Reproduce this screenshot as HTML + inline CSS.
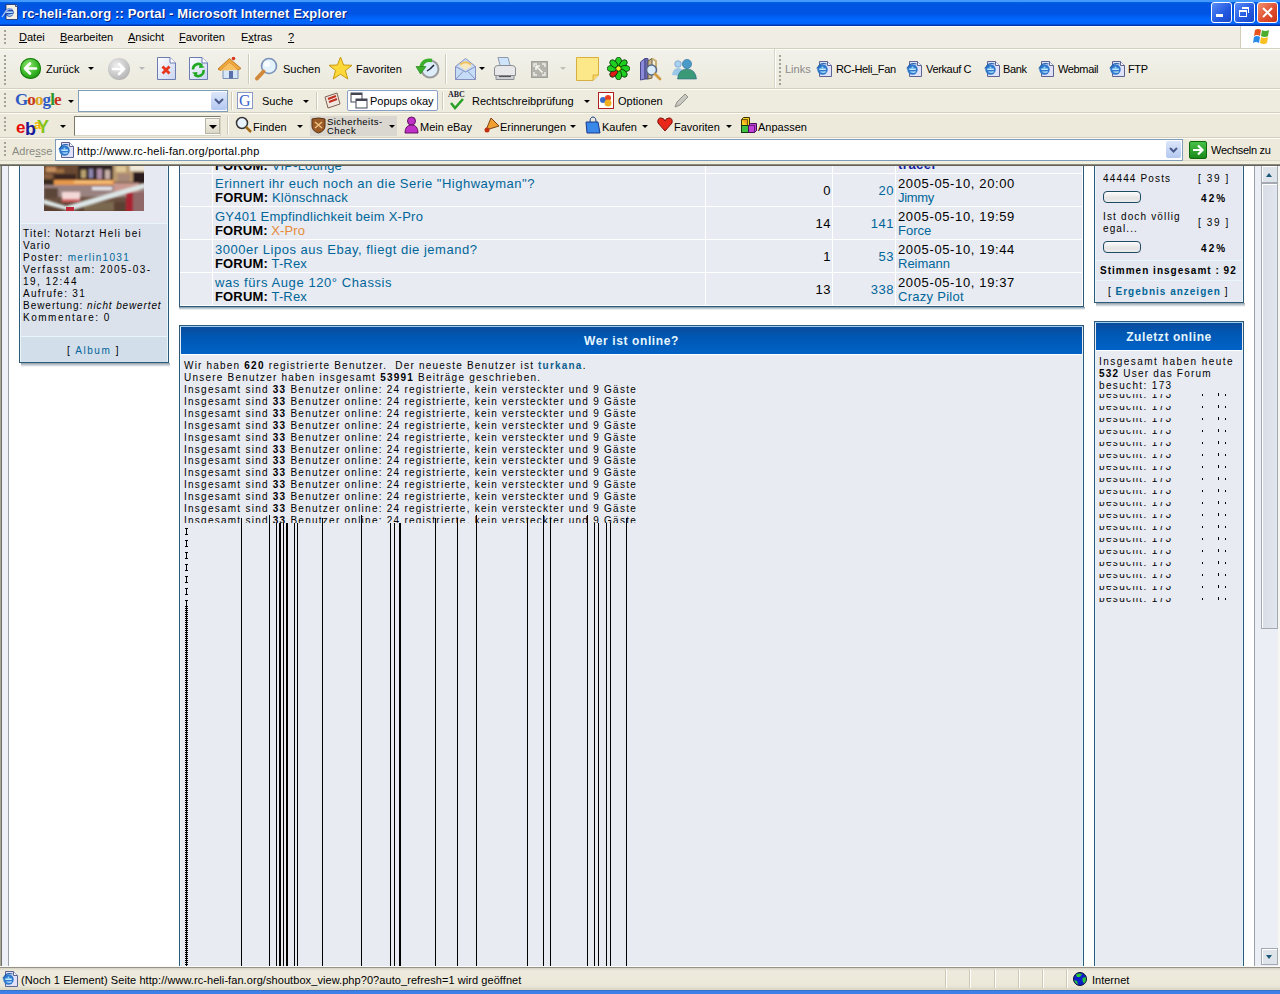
<!DOCTYPE html>
<html><head><meta charset="utf-8">
<style>
*{margin:0;padding:0;box-sizing:border-box}
html,body{width:1280px;height:994px;overflow:hidden;background:#fff;font-family:"Liberation Sans",sans-serif}
.a{position:absolute}
.t{position:absolute;white-space:nowrap;font-size:11px;line-height:13px;color:#000}
#title{left:0;top:0;width:1280px;height:26px;background:linear-gradient(#4499ff 0,#4499ff 2px,#0066ee 2px,#0058e0 3px,#0054e3 8px,#0054e3 14px,#005cf0 16px,#0066ff 19px,#0064fc 24px,#0033aa 25px,#0033aa 26px)}
.bar{position:absolute;left:0;width:1280px;background:#eeede5}
.grip{position:absolute;width:2px;background:repeating-linear-gradient(#a5a398 0 2px,transparent 2px 4px)}
.sepv{position:absolute;width:1px;background:#c5c2b2;box-shadow:1px 0 0 #fff}
.ch{font-size:11px;line-height:13px}
.blink{color:#006699}
.pg{font-size:10px;line-height:12px;color:#000}
.tp{font-size:13px;line-height:14px;letter-spacing:.5px}
.ol{letter-spacing:1.25px}
.ie{position:absolute;font-size:15px;line-height:14px;font-weight:bold;color:#2a78d8;font-family:"Liberation Sans",sans-serif}
.vl{position:absolute;top:523px;height:443px;width:1px;background:#000}
</style></head><body>

<!-- TITLE BAR -->
<div id="title" class="a"></div>
<div class="t" style="left:22px;top:6px;color:#fff;font-weight:bold;font-size:13px;line-height:16px;letter-spacing:.13px;text-shadow:1px 1px 0 #0a1e78">rc-heli-fan.org :: Portal - Microsoft Internet Explorer</div>

<!-- MENU BAR -->
<div class="bar" style="top:26px;height:1px;background:#f8fafc"></div>
<div class="bar" style="top:27px;height:21px;background:#efede4"></div>
<div class="bar" style="top:48px;height:1px;background:#d3d0c2"></div>
<div class="bar" style="top:49px;height:1px;background:#fdfdf4"></div>
<div class="bar" style="top:50px;height:38px;background:linear-gradient(#f2f1ea,#eceadd)"></div>
<div class="bar" style="top:88px;height:1px;background:#d3d0c2"></div>
<div class="bar" style="top:89px;height:1px;background:#fdfdf4"></div>
<div class="bar" style="top:90px;height:22px;background:#eeecdf"></div>
<div class="bar" style="top:112px;height:1px;background:#d3d0c2"></div>
<div class="bar" style="top:113px;height:1px;background:#fdfdf4"></div>
<div class="bar" style="top:114px;height:23px;background:#edeadc"></div>
<div class="bar" style="top:137px;height:1px;background:#d3d0c2"></div>
<div class="bar" style="top:138px;height:1px;background:#fdfdf4"></div>
<div class="bar" style="top:139px;height:21px;background:#edeadc"></div>
<div class="a" style="left:0;top:160px;width:1280px;height:1px;background:#dcd9c8"></div>
<div class="a" style="left:0;top:161px;width:1280px;height:3px;background:#f0eedf"></div>
<div class="a" style="left:0;top:164px;width:1280px;height:1px;background:#8a887c"></div>
<div class="a" style="left:0;top:165px;width:1280px;height:1px;background:#65645a"></div>

<!-- CONTENT FRAME -->
<div class="a" style="left:0;top:166px;width:1px;height:800px;background:#a8a898"></div>
<div class="a" style="left:1px;top:166px;width:1px;height:800px;background:#707068"></div>
<div class="a" style="left:2px;top:166px;width:6px;height:800px;background:#eef0f8"></div>
<div class="a" style="left:8px;top:166px;width:1px;height:800px;background:#9aa0a8"></div>



<!-- title icon -->
<svg class="a" style="left:1px;top:3px" width="18" height="18" viewBox="0 0 18 18"><path d="M5 1.5H14.5L16.5 3.5V16.5H5Z" fill="#f4f0e4" stroke="#1a2a6a" stroke-width=".8"/><path d="M14.5 1.5V3.5H16.5" fill="#fff" stroke="#1a2a6a" stroke-width=".8"/><circle cx="8.5" cy="9.5" r="4.2" fill="#1e4ab8"/><path d="M5.2 9.2H11.8" stroke="#c8f0ff" stroke-width="1.4"/><path d="M11.6 11.3Q9 12.6 6.5 11.8" stroke="#c8f0ff" stroke-width="1.1" fill="none"/><path d="M1 14L5.5 7.5Q8 5.5 11.5 6" stroke="#b8c8f0" stroke-width="1.3" fill="none"/></svg>
<!-- caption buttons -->
<div class="a" style="left:1211px;top:2px;width:21px;height:21px;border:1px solid #fff;border-radius:3px;background:linear-gradient(135deg,#5a8cf8,#2258e0 60%,#1a48c8)"></div>
<div class="a" style="left:1216px;top:14px;width:7px;height:3px;background:#fff"></div>
<div class="a" style="left:1234px;top:2px;width:21px;height:21px;border:1px solid #fff;border-radius:3px;background:linear-gradient(135deg,#5a8cf8,#2258e0 60%,#1a48c8)"></div>
<div class="a" style="left:1239px;top:10px;width:8px;height:7px;border:1px solid #fff;border-top-width:2px"></div>
<div class="a" style="left:1242px;top:7px;width:7px;height:6px;border:1px solid #fff;border-top-width:2px;border-left:none;border-bottom:none"></div>
<div class="a" style="left:1257px;top:2px;width:21px;height:21px;border:1px solid #fff;border-radius:3px;background:linear-gradient(135deg,#f09070,#e05030 55%,#c83818)"></div>
<svg class="a" style="left:1257px;top:2px" width="21" height="21"><path d="M6 6 L15 15 M15 6 L6 15" stroke="#fff" stroke-width="2"/></svg>

<!-- MENU -->
<div class="grip" style="left:4px;top:30px;height:16px"></div>
<div class="t ch" style="left:19px;top:31px"><u>D</u>atei</div>
<div class="t ch" style="left:60px;top:31px"><u>B</u>earbeiten</div>
<div class="t ch" style="left:128px;top:31px"><u>A</u>nsicht</div>
<div class="t ch" style="left:179px;top:31px"><u>F</u>avoriten</div>
<div class="t ch" style="left:241px;top:31px">E<u>x</u>tras</div>
<div class="t ch" style="left:288px;top:31px"><u>?</u></div>
<div class="a" style="left:1240px;top:26px;width:1px;height:22px;background:#d0cdb8"></div>
<div class="a" style="left:1241px;top:26px;width:39px;height:22px;background:#fff"></div>
<svg class="a" style="left:1251px;top:27px" width="22" height="20" viewBox="0 0 22 20"><path d="M4 3 Q7 1 10 3 L9 9 Q6 7 3 9Z" fill="#e8541c"/><path d="M11 3 Q14 5 18 3 L17 9 Q14 11 10 9Z" fill="#4cae2c"/><path d="M3 10 Q6 8 9 10 L8 16 Q5 14 2 16Z" fill="#2a8ae8"/><path d="M10 10 Q13 12 17 10 L16 16 Q13 18 9 16Z" fill="#f8c020"/></svg>

<!-- STANDARD TOOLBAR -->
<div class="grip" style="left:4px;top:55px;height:30px"></div>
<div class="a" style="left:20px;top:58px;width:21px;height:21px;border-radius:50%;background:radial-gradient(circle at 40% 35%,#8ee870,#32b020 55%,#1a8010);box-shadow:0 0 0 1px #1a7a10 inset"></div>
<svg class="a" style="left:20px;top:58px" width="21" height="21"><path d="M5 10.5 L10 5.5 M5 10.5 L10 15.5 M5 10.5 H16" stroke="#fff" stroke-width="2.6" stroke-linecap="round" fill="none"/></svg>
<div class="t ch" style="left:46px;top:63px">Zurück</div>
<div class="a" style="left:88px;top:67px;border-left:3px solid transparent;border-right:3px solid transparent;border-top:3px solid #000"></div>
<div class="a" style="left:108px;top:58px;width:22px;height:22px;border-radius:50%;background:radial-gradient(circle at 40% 35%,#f0f0f0,#c0c0c0 60%,#a0a0a0)"></div>
<svg class="a" style="left:108px;top:58px" width="22" height="22"><path d="M16 11 L11 6 M16 11 L11 16 M16 11 H5" stroke="#fff" stroke-width="2.6" stroke-linecap="round" fill="none"/></svg>
<div class="a" style="left:139px;top:67px;border-left:3px solid transparent;border-right:3px solid transparent;border-top:3px solid #b8b8b8"></div>
<!-- stop -->
<svg class="a" style="left:156px;top:56px" width="21" height="25" viewBox="0 0 21 25"><path d="M1.5 1.5H14L19.5 7V23.5H1.5Z" fill="url(#docg)" stroke="#6c7cb0"/><path d="M14 1.5V7H19.5" fill="#fff" stroke="#6c7cb0"/><path d="M6.5 10.5L13.5 17.5M13.5 10.5L6.5 17.5" stroke="#e8361c" stroke-width="2.8"/></svg>
<!-- refresh -->
<svg class="a" style="left:188px;top:56px" width="21" height="25" viewBox="0 0 21 25"><defs><linearGradient id="docg" x1="0" y1="0" x2="1" y2="1"><stop offset="0" stop-color="#ffffff"/><stop offset="1" stop-color="#c8d4f0"/></linearGradient></defs><path d="M1.5 1.5H14L19.5 7V23.5H1.5Z" fill="url(#docg)" stroke="#6c7cb0"/><path d="M14 1.5V7H19.5" fill="#fff" stroke="#6c7cb0"/><path d="M5 13.5A5.3 5.3 0 0 1 14 9.5" stroke="#22a822" stroke-width="2.6" fill="none"/><path d="M15.5 14A5.3 5.3 0 0 1 6.5 18.5" stroke="#22a822" stroke-width="2.6" fill="none"/><path d="M12 7L16.5 11.5L11 12Z" fill="#22a822"/><path d="M8.5 20.5L4 16.5L9.5 16Z" fill="#22a822"/></svg>
<!-- home -->
<svg class="a" style="left:217px;top:55px" width="26" height="26" viewBox="0 0 26 26"><path d="M6 13V23.5H21V13" fill="#d4e6f8" stroke="#7890b0"/><path d="M12 16H16V23.5H12Z" fill="#5a70a8"/><path d="M1 14L12.5 3.5L24 13.5L21 15L12.5 7.5L3.5 15.5Z" fill="#f0a838" stroke="#c07a28" stroke-width="1"/><path d="M3.5 15.5L12.5 7.5L21 15" fill="#f8c060"/><circle cx="16.5" cy="3.5" r="1.8" fill="#d83820"/></svg>
<div class="a" style="left:248px;top:54px;width:1px;height:30px;background:#cfcbb8;box-shadow:1px 0 0 #fff"></div>
<!-- search -->
<svg class="a" style="left:254px;top:56px" width="26" height="26" viewBox="0 0 26 26"><circle cx="15" cy="10" r="7.5" fill="#e4f2fc" stroke="#7890b8" stroke-width="1.6"/><circle cx="13" cy="8" r="3" fill="#fff" opacity=".8"/><path d="M9.5 15.5L3 22.5" stroke="#d0883a" stroke-width="4" stroke-linecap="round"/></svg>
<div class="t ch" style="left:283px;top:63px">Suchen</div>
<!-- star -->
<svg class="a" style="left:328px;top:56px" width="25" height="25" viewBox="0 0 25 25"><path d="M12.5 1 L15.6 9 L24 9.3 L17.4 14.6 L19.8 23 L12.5 18.2 L5.2 23 L7.6 14.6 L1 9.3 L9.4 9Z" fill="#fcd838" stroke="#c89a10" stroke-width="1"/></svg>
<div class="t ch" style="left:356px;top:63px">Favoriten</div>
<!-- history -->
<svg class="a" style="left:414px;top:56px" width="26" height="26" viewBox="0 0 26 26"><circle cx="16" cy="13" r="8.5" fill="#dcecf8" stroke="#9a9a9a" stroke-width="2"/><path d="M16 13L20 9" stroke="#223" stroke-width="1.6"/><path d="M16 13L13 15" stroke="#223" stroke-width="1.3"/><path d="M18 4.5Q9 3 7 11" stroke="#3ab02a" stroke-width="3.6" fill="none"/><path d="M2 10.5L12 10.5L6.5 18Z" fill="#3ab02a" stroke="#1a7a10" stroke-width=".6"/></svg>
<div class="a" style="left:445px;top:54px;width:1px;height:30px;background:#cfcbb8;box-shadow:1px 0 0 #fff"></div>
<!-- mail -->
<svg class="a" style="left:454px;top:57px" width="23" height="24" viewBox="0 0 23 24"><path d="M1.5 9.5L11.5 1.5L21.5 9.5V22.5H1.5Z" fill="#c4dcf6" stroke="#8890c0"/><path d="M5 9L11.5 4L18 9L11.5 13Z" fill="#f8e8c0"/><path d="M6 7.5Q11.5 3 17 7.5" stroke="#f0c060" stroke-width="2" fill="none"/><path d="M1.5 9.5L11.5 15L21.5 9.5M1.5 22.5L9 14.5M21.5 22.5L14 14.5" stroke="#8890c0" fill="none"/></svg>
<div class="a" style="left:479px;top:67px;border-left:3px solid transparent;border-right:3px solid transparent;border-top:3px solid #000"></div>
<!-- printer -->
<svg class="a" style="left:493px;top:56px" width="24" height="25" viewBox="0 0 24 25"><path d="M5 1.5H15L17.5 11H7.5Z" fill="#cfe4fa" stroke="#8a9ab0"/><path d="M1.5 12Q2 9.5 5 9.5H19Q22 9.5 22.5 12V19.5H1.5Z" fill="#e8e8ea" stroke="#8a8e94"/><path d="M3 19.5H21V23.5H3Z" fill="#d0d2d6" stroke="#8a8e94"/><path d="M6 20.5H18" stroke="#555" stroke-width="1.2"/></svg>
<!-- edit (disabled) -->
<svg class="a" style="left:531px;top:61px" width="17" height="17" viewBox="0 0 17 17"><rect x=".5" y=".5" width="16" height="16" fill="#b4b4ac" stroke="#a0a098"/><path d="M3 6V3H6M11 3H14V6M14 11V14H11M6 14H3V11" stroke="#f0f0ec" stroke-width="1.4" fill="none"/><path d="M11.5 11.5L5 5M5 5H9M5 5V9" stroke="#f4f4f0" stroke-width="1.6" fill="none"/></svg>
<div class="a" style="left:560px;top:67px;border-left:3px solid transparent;border-right:3px solid transparent;border-top:3px solid #c0c0b8"></div>
<!-- note -->
<svg class="a" style="left:576px;top:57px" width="23" height="24" viewBox="0 0 23 24"><path d="M.5 .5H22.5V18L17 23.5H.5Z" fill="#fce888" stroke="#d8b040"/><path d="M22.5 18H17V23.5" fill="#f8d868" stroke="#d8b040"/></svg>
<!-- icq -->
<svg class="a" style="left:607px;top:57px" width="23" height="23" viewBox="0 0 23 23"><ellipse cx="11.5" cy="4.8" rx="3" ry="4.6" fill="#20d020" stroke="#0a3a0a" stroke-width=".9" transform="rotate(0 11.5 11.5)"/><ellipse cx="11.5" cy="4.8" rx="3" ry="4.6" fill="#20d020" stroke="#0a3a0a" stroke-width=".9" transform="rotate(45 11.5 11.5)"/><ellipse cx="11.5" cy="4.8" rx="3" ry="4.6" fill="#20d020" stroke="#0a3a0a" stroke-width=".9" transform="rotate(90 11.5 11.5)"/><ellipse cx="11.5" cy="4.8" rx="3" ry="4.6" fill="#20d020" stroke="#0a3a0a" stroke-width=".9" transform="rotate(135 11.5 11.5)"/><ellipse cx="11.5" cy="4.8" rx="3" ry="4.6" fill="#20d020" stroke="#0a3a0a" stroke-width=".9" transform="rotate(180 11.5 11.5)"/><ellipse cx="11.5" cy="4.8" rx="3" ry="4.6" fill="#e01818" stroke="#0a3a0a" stroke-width=".9" transform="rotate(225 11.5 11.5)"/><ellipse cx="11.5" cy="4.8" rx="3" ry="4.6" fill="#20d020" stroke="#0a3a0a" stroke-width=".9" transform="rotate(270 11.5 11.5)"/><ellipse cx="11.5" cy="4.8" rx="3" ry="4.6" fill="#20d020" stroke="#0a3a0a" stroke-width=".9" transform="rotate(315 11.5 11.5)"/><circle cx="11.5" cy="11.5" r="2.6" fill="#f8f020" stroke="#0a3a0a" stroke-width=".8"/></svg>
<!-- research -->
<svg class="a" style="left:639px;top:57px" width="24" height="24" viewBox="0 0 24 24"><path d="M1.5 5L6 1.5V22L1.5 23Z" fill="#8a8ad8" stroke="#4a4a8a"/><path d="M6 1.5H9V22H6Z" fill="#6a6ab8" stroke="#4a4a8a"/><path d="M9 4L13 1.5V21L9 22Z" fill="#c8b890" stroke="#6a5a3a"/><path d="M13 1.5L17 4V14" fill="none" stroke="#c8b070" stroke-width="2"/><circle cx="12.5" cy="13" r="5" fill="#d8ecfc" stroke="#5a6a88" stroke-width="1.6"/><path d="M16 17L21 22" stroke="#d09a40" stroke-width="2.8" stroke-linecap="round"/></svg>
<!-- messenger -->
<svg class="a" style="left:671px;top:58px" width="26" height="22" viewBox="0 0 26 22"><circle cx="7" cy="6" r="3.3" fill="#a8d0f0" stroke="#6890c0" stroke-width=".6"/><path d="M1 17Q2 10 7 10Q11 10 12 14L10 18Z" fill="#9cc8e8"/><circle cx="16" cy="6" r="4.6" fill="#4a9ac8" stroke="#2a6a98" stroke-width=".6"/><path d="M6.5 21Q7.5 11 16 11Q24.5 11 25.5 21Z" fill="#3a9a78" stroke="#2a6a88" stroke-width=".6"/></svg>
<div class="a" style="left:774px;top:49px;width:1px;height:39px;background:#d8d5c4;box-shadow:1px 0 0 #fff"></div>
<div class="grip" style="left:779px;top:55px;height:30px"></div>
<div class="t ch" style="left:785px;top:63px;color:#8a8a8a">Links</div>
<svg class="a" style="left:816px;top:61px" width="16" height="16" viewBox="0 0 16 16"><path d="M3.5 0.5H11.5L15.5 4.5V15.5H3.5Z" fill="#dfe2fa" stroke="#5c6390"/><path d="M11.5 0.5V4.5H15.5" fill="#f4f4ff" stroke="#5c6390"/><circle cx="6.5" cy="8.5" r="5.2" fill="#2f78cc"/><path d="M3.3 8.2H9.8" stroke="#bfeaff" stroke-width="1.6"/><path d="M9.6 10.6Q7 11.6 4.5 10.8" stroke="#bfeaff" stroke-width="1.2" fill="none"/><circle cx="6.5" cy="6.6" r="1" fill="#9adcff"/><path d="M0.8 7.5L4 3.5Q7 1.8 10.5 3" stroke="#1f5ea8" stroke-width="1.2" fill="none"/></svg>
<div class="t ch" style="left:836px;top:63px;letter-spacing:-.35px">RC-Heli_Fan</div>
<svg class="a" style="left:906px;top:61px" width="16" height="16" viewBox="0 0 16 16"><path d="M3.5 0.5H11.5L15.5 4.5V15.5H3.5Z" fill="#dfe2fa" stroke="#5c6390"/><path d="M11.5 0.5V4.5H15.5" fill="#f4f4ff" stroke="#5c6390"/><circle cx="6.5" cy="8.5" r="5.2" fill="#2f78cc"/><path d="M3.3 8.2H9.8" stroke="#bfeaff" stroke-width="1.6"/><path d="M9.6 10.6Q7 11.6 4.5 10.8" stroke="#bfeaff" stroke-width="1.2" fill="none"/><circle cx="6.5" cy="6.6" r="1" fill="#9adcff"/><path d="M0.8 7.5L4 3.5Q7 1.8 10.5 3" stroke="#1f5ea8" stroke-width="1.2" fill="none"/></svg>
<div class="t ch" style="left:926px;top:63px;letter-spacing:-.35px">Verkauf C</div>
<svg class="a" style="left:984px;top:61px" width="16" height="16" viewBox="0 0 16 16"><path d="M3.5 0.5H11.5L15.5 4.5V15.5H3.5Z" fill="#dfe2fa" stroke="#5c6390"/><path d="M11.5 0.5V4.5H15.5" fill="#f4f4ff" stroke="#5c6390"/><circle cx="6.5" cy="8.5" r="5.2" fill="#2f78cc"/><path d="M3.3 8.2H9.8" stroke="#bfeaff" stroke-width="1.6"/><path d="M9.6 10.6Q7 11.6 4.5 10.8" stroke="#bfeaff" stroke-width="1.2" fill="none"/><circle cx="6.5" cy="6.6" r="1" fill="#9adcff"/><path d="M0.8 7.5L4 3.5Q7 1.8 10.5 3" stroke="#1f5ea8" stroke-width="1.2" fill="none"/></svg>
<div class="t ch" style="left:1003px;top:63px;letter-spacing:-.35px">Bank</div>
<svg class="a" style="left:1038px;top:61px" width="16" height="16" viewBox="0 0 16 16"><path d="M3.5 0.5H11.5L15.5 4.5V15.5H3.5Z" fill="#dfe2fa" stroke="#5c6390"/><path d="M11.5 0.5V4.5H15.5" fill="#f4f4ff" stroke="#5c6390"/><circle cx="6.5" cy="8.5" r="5.2" fill="#2f78cc"/><path d="M3.3 8.2H9.8" stroke="#bfeaff" stroke-width="1.6"/><path d="M9.6 10.6Q7 11.6 4.5 10.8" stroke="#bfeaff" stroke-width="1.2" fill="none"/><circle cx="6.5" cy="6.6" r="1" fill="#9adcff"/><path d="M0.8 7.5L4 3.5Q7 1.8 10.5 3" stroke="#1f5ea8" stroke-width="1.2" fill="none"/></svg>
<div class="t ch" style="left:1058px;top:63px;letter-spacing:-.35px">Webmail</div>
<svg class="a" style="left:1109px;top:61px" width="16" height="16" viewBox="0 0 16 16"><path d="M3.5 0.5H11.5L15.5 4.5V15.5H3.5Z" fill="#dfe2fa" stroke="#5c6390"/><path d="M11.5 0.5V4.5H15.5" fill="#f4f4ff" stroke="#5c6390"/><circle cx="6.5" cy="8.5" r="5.2" fill="#2f78cc"/><path d="M3.3 8.2H9.8" stroke="#bfeaff" stroke-width="1.6"/><path d="M9.6 10.6Q7 11.6 4.5 10.8" stroke="#bfeaff" stroke-width="1.2" fill="none"/><circle cx="6.5" cy="6.6" r="1" fill="#9adcff"/><path d="M0.8 7.5L4 3.5Q7 1.8 10.5 3" stroke="#1f5ea8" stroke-width="1.2" fill="none"/></svg>
<div class="t ch" style="left:1128px;top:63px;letter-spacing:-.35px">FTP</div>

<!-- GOOGLE BAR -->
<div class="grip" style="left:4px;top:93px;height:16px"></div>
<div class="t" style="left:15px;top:90px;font-family:'Liberation Serif',serif;font-size:17px;line-height:19px;font-weight:bold;letter-spacing:-.9px"><span style="color:#2f5bc4">G</span><span style="color:#c8361a">o</span><span style="color:#dca418">o</span><span style="color:#2f5bc4">g</span><span style="color:#2a962a">l</span><span style="color:#c8361a">e</span></div>
<div class="a" style="left:68px;top:100px;border-left:3px solid transparent;border-right:3px solid transparent;border-top:3px solid #000"></div>
<div class="a" style="left:78px;top:90px;width:150px;height:22px;background:#fff;border:1px solid #7f9db9"></div>
<div class="a" style="left:211px;top:92px;width:16px;height:18px;background:linear-gradient(#dce6fa,#b4c8f0);border-radius:2px"></div>
<svg class="a" style="left:211px;top:92px" width="16" height="18"><path d="M4 7 L8 11 L12 7" stroke="#4a5a8a" stroke-width="2" fill="none"/></svg>
<div class="a" style="left:231px;top:92px;width:1px;height:18px;background:#cfcbb8;box-shadow:1px 0 0 #fff"></div>
<div class="a" style="left:237px;top:92px;width:16px;height:17px;background:#fff;border:1px solid #8a9ac8"></div>
<div class="t" style="left:239px;top:92px;font-family:'Liberation Serif',serif;font-size:16px;line-height:17px;color:#3a64c8">G</div>
<div class="t ch" style="left:262px;top:95px">Suche</div>
<div class="a" style="left:303px;top:100px;border-left:3px solid transparent;border-right:3px solid transparent;border-top:3px solid #000"></div>
<div class="a" style="left:316px;top:92px;width:1px;height:18px;background:#cfcbb8;box-shadow:1px 0 0 #fff"></div>
<svg class="a" style="left:323px;top:92px" width="18" height="17"><path d="M2 5 L14 1 L17 12 L5 16Z" fill="#f0e8e0" stroke="#806050"/><path d="M5 7 L13 4 M6 10 L14 7" stroke="#c03020" stroke-width="2"/></svg>
<div class="a" style="left:347px;top:90px;width:91px;height:21px;background:#fff;border:1px solid #8aa0c8;border-radius:2px"></div>
<svg class="a" style="left:350px;top:92px" width="18" height="17"><rect x="1" y="1" width="11" height="9" fill="#fff" stroke="#445"/><rect x="1" y="1" width="11" height="2" fill="#445"/><rect x="6" y="7" width="11" height="9" fill="#fff" stroke="#445"/><rect x="6" y="7" width="11" height="2" fill="#445"/></svg>
<div class="t ch" style="left:370px;top:95px">Popups okay</div>
<div class="a" style="left:442px;top:92px;width:1px;height:18px;background:#cfcbb8;box-shadow:1px 0 0 #fff"></div>
<div class="t" style="left:448px;top:91px;font-family:'Liberation Serif',serif;font-size:8px;line-height:8px;font-weight:bold;color:#223">ABC</div>
<svg class="a" style="left:449px;top:98px" width="16" height="12"><path d="M2 5 L6 10 L14 1" stroke="#28a028" stroke-width="2.5" fill="none"/></svg>
<div class="t ch" style="left:472px;top:95px">Rechtschreibprüfung</div>
<div class="a" style="left:584px;top:100px;border-left:3px solid transparent;border-right:3px solid transparent;border-top:3px solid #000"></div>
<div class="a" style="left:598px;top:92px;width:16px;height:17px;background:#fff;border:1px solid #b02020"></div>
<svg class="a" style="left:598px;top:92px" width="16" height="17"><circle cx="5" cy="8" r="3" fill="#3a6ac8"/><circle cx="10" cy="6" r="3" fill="#e84020"/><circle cx="10" cy="11" r="3.5" fill="#f0b020"/></svg>
<div class="t ch" style="left:618px;top:95px">Optionen</div>
<svg class="a" style="left:672px;top:92px" width="17" height="17"><path d="M3 15 L5 10 L13 2 L16 5 L8 13Z" fill="#c8c8c0" stroke="#909088"/></svg>

<!-- EBAY BAR -->
<div class="grip" style="left:4px;top:117px;height:16px"></div>
<svg class="a" style="left:16px;top:115px" width="36" height="22" viewBox="0 0 36 22"><text x="0" y="18" font-family="Liberation Sans" font-weight="bold" font-size="17" fill="#e60c0c" letter-spacing="-1">e</text><text x="9" y="20" font-family="Liberation Sans" font-weight="bold" font-size="18" fill="#1a1a9a">b</text><text x="18" y="14" font-family="Liberation Sans" font-weight="bold" font-size="13" fill="#f0b400">a</text><text x="21" y="18" font-family="Liberation Sans" font-weight="bold" font-size="18" fill="#88c418">Y</text></svg>
<div class="a" style="left:60px;top:125px;border-left:3px solid transparent;border-right:3px solid transparent;border-top:3px solid #000"></div>
<div class="a" style="left:74px;top:116px;width:147px;height:20px;background:#fff;border:1px solid #7a7868;border-right-color:#d8d4c4;border-bottom-color:#d8d4c4"></div>
<div class="a" style="left:205px;top:118px;width:15px;height:16px;background:linear-gradient(#f4f2ea,#dcd8c8);border:1px solid #b8b4a4"></div>
<div class="a" style="left:209px;top:125px;border-left:4px solid transparent;border-right:4px solid transparent;border-top:4px solid #000"></div>
<div class="a" style="left:227px;top:116px;width:1px;height:19px;background:#cfcbb8;box-shadow:1px 0 0 #fff"></div>
<svg class="a" style="left:235px;top:116px" width="17" height="18"><circle cx="7" cy="7" r="5.5" fill="#e8f4ff" stroke="#333" stroke-width="1.5"/><path d="M11 11 L16 16" stroke="#a06a18" stroke-width="2.5"/></svg>
<div class="t ch" style="left:253px;top:121px">Finden</div>
<div class="a" style="left:297px;top:125px;border-left:3px solid transparent;border-right:3px solid transparent;border-top:3px solid #000"></div>
<div class="a" style="left:310px;top:116px;width:87px;height:20px;background:#d9d7cf"></div>
<svg class="a" style="left:311px;top:117px" width="15" height="17"><path d="M1 2 Q7.5 0 14 2 V9 Q14 14 7.5 16 Q1 14 1 9Z" fill="#9a5a28" stroke="#5a3010"/><path d="M4 5 L11 11 M11 5 L4 11" stroke="#f0c080" stroke-width="1.5"/></svg>
<div class="t" style="left:327px;top:117px;font-size:9.5px;line-height:9px;letter-spacing:.45px">Sicherheits-<br>Check</div>
<div class="a" style="left:389px;top:125px;border-left:3px solid transparent;border-right:3px solid transparent;border-top:3px solid #000"></div>
<svg class="a" style="left:404px;top:116px" width="15" height="18"><circle cx="7.5" cy="5" r="4" fill="#c030c8" stroke="#601060"/><path d="M1 17 Q1 9 7.5 9 Q14 9 14 17Z" fill="#c030c8" stroke="#601060"/></svg>
<div class="t ch" style="left:420px;top:121px">Mein eBay</div>
<svg class="a" style="left:483px;top:116px" width="17" height="18"><path d="M3 14 L8 2 L16 10Z" fill="#f0a030" stroke="#804010"/><circle cx="4" cy="14" r="2.5" fill="#c03010"/></svg>
<div class="t ch" style="left:500px;top:121px">Erinnerungen</div>
<div class="a" style="left:570px;top:125px;border-left:3px solid transparent;border-right:3px solid transparent;border-top:3px solid #000"></div>
<svg class="a" style="left:585px;top:116px" width="16" height="18"><path d="M1 6 H13 L15 17 H2Z" fill="#3a88e8" stroke="#1a3a8a"/><path d="M5 6 Q5 1 8 1 Q11 1 11 6" stroke="#1a3a8a" fill="none"/></svg>
<div class="t ch" style="left:602px;top:121px">Kaufen</div>
<div class="a" style="left:642px;top:125px;border-left:3px solid transparent;border-right:3px solid transparent;border-top:3px solid #000"></div>
<svg class="a" style="left:657px;top:117px" width="16" height="15"><path d="M8 14 L1 6 Q0 1 4 1 Q7 1 8 4 Q9 1 12 1 Q16 1 15 6Z" fill="#e82818" stroke="#801010"/></svg>
<div class="t ch" style="left:674px;top:121px">Favoriten</div>
<div class="a" style="left:726px;top:125px;border-left:3px solid transparent;border-right:3px solid transparent;border-top:3px solid #000"></div>
<svg class="a" style="left:740px;top:116px" width="18" height="18" viewBox="0 0 18 18"><path d="M1.5 3.5L3.5 1.5H9.5V9.5H1.5Z" fill="#f8d020" stroke="#3a3000"/><path d="M1.5 3.5H7.5V9.5" fill="#f0a020" stroke="#3a3000" stroke-width=".7"/><rect x="1.5" y="9.5" width="7" height="7" fill="#40c040" stroke="#103a10"/><path d="M8.5 9.5L10.5 7.5H16.5V14.5L14.5 16.5H8.5Z" fill="#c040d8" stroke="#401050"/><path d="M8.5 9.5H14.5V16.5" fill="none" stroke="#401050" stroke-width=".7"/></svg>
<div class="t ch" style="left:758px;top:121px">Anpassen</div>

<!-- ADDRESS BAR -->
<div class="grip" style="left:4px;top:142px;height:16px"></div>
<div class="t ch" style="left:12px;top:145px;color:#8a8a80">Adre<u>s</u>se</div>
<div class="a" style="left:55px;top:139px;width:1128px;height:22px;background:#fff;border:1px solid #7f9db9"></div>
<svg class="a" style="left:58px;top:142px" width="16" height="16" viewBox="0 0 16 16"><path d="M3.5 0.5H11.5L15.5 4.5V15.5H3.5Z" fill="#dfe2fa" stroke="#5c6390"/><path d="M11.5 0.5V4.5H15.5" fill="#f4f4ff" stroke="#5c6390"/><circle cx="6.5" cy="8.5" r="5.2" fill="#2f78cc"/><path d="M3.3 8.2H9.8" stroke="#bfeaff" stroke-width="1.6"/><path d="M9.6 10.6Q7 11.6 4.5 10.8" stroke="#bfeaff" stroke-width="1.2" fill="none"/><circle cx="6.5" cy="6.6" r="1" fill="#9adcff"/><path d="M0.8 7.5L4 3.5Q7 1.8 10.5 3" stroke="#1f5ea8" stroke-width="1.2" fill="none"/></svg>
<div class="t ch" style="left:77px;top:145px;letter-spacing:.24px">http://www.rc-heli-fan.org/portal.php</div>
<div class="a" style="left:1166px;top:141px;width:15px;height:17px;background:linear-gradient(#dce6fa,#b4c8f0);border-radius:2px"></div>
<svg class="a" style="left:1166px;top:141px" width="15" height="17"><path d="M4 7 L7.5 10.5 L11 7" stroke="#4a5a8a" stroke-width="2" fill="none"/></svg>
<div class="a" style="left:1189px;top:141px;width:18px;height:18px;background:linear-gradient(#48c048,#1a8a1a);border-radius:2px;border:1px solid #0a6a0a"></div>
<svg class="a" style="left:1189px;top:141px" width="18" height="18"><path d="M4 9 H13 M9 4.5 L13.5 9 L9 13.5" stroke="#fff" stroke-width="2.2" fill="none"/></svg>
<div class="t ch" style="left:1211px;top:144px;letter-spacing:-.3px">Wechseln zu</div>

<!-- ================= PAGE CONTENT ================= -->
<div class="a" style="left:9px;top:166px;width:1245px;height:800px;background:#fff"></div>

<!-- LEFT PANEL -->
<div class="a" style="left:19px;top:166px;width:150px;height:197px;background:#2c5a78"></div>
<div class="a" style="left:20px;top:166px;width:148px;height:196px;background:#e8f6fc"></div>
<div class="a" style="left:21px;top:166px;width:146px;height:57px;background:#e6e9f1"></div>
<div class="a" style="left:21px;top:224px;width:146px;height:112px;background:#dce2ec"></div>
<div class="a" style="left:21px;top:337px;width:146px;height:25px;background:#d3deeb"></div>
<div class="a" style="left:21px;top:363px;width:149px;height:4px;background:linear-gradient(#8f9ca6,#fff)"></div>
<svg class="a" style="left:44px;top:166px" width="100" height="45" viewBox="0 0 100 45"><defs><filter id="bl" x="-10%" y="-10%" width="120%" height="120%"><feGaussianBlur stdDeviation="0.9"/></filter><clipPath id="pc"><rect width="100" height="45"/></clipPath></defs><g clip-path="url(#pc)"><rect width="100" height="45" fill="#6a5040"/><g filter="url(#bl)">
<rect x="-2" y="-2" width="38" height="18" fill="#6a4a32"/><rect x="2" y="1" width="10" height="5" fill="#c89060"/><rect x="12" y="3" width="8" height="4" fill="#a07040"/><rect x="10" y="8" width="22" height="7" fill="#3a2620"/><rect x="0" y="8" width="8" height="6" fill="#8a6040"/>
<rect x="34" y="-2" width="36" height="17" fill="#2e2220"/><rect x="37" y="4" width="5" height="8" fill="#b8a070"/><rect x="45" y="3" width="4" height="9" fill="#9088b0"/><rect x="53" y="3" width="5" height="10" fill="#b090a8"/><rect x="61" y="4" width="5" height="9" fill="#c8b0a8"/>
<rect x="69" y="-2" width="33" height="18" fill="#b89870"/><rect x="72" y="0" width="10" height="6" fill="#e0c898"/><rect x="74" y="8" width="12" height="8" fill="#a88878"/><rect x="89" y="6" width="13" height="11" fill="#2a1e1e"/><rect x="86" y="-2" width="16" height="7" fill="#f0e8d8"/>
<rect x="8" y="14" width="62" height="5" fill="#e89848"/><rect x="30" y="15" width="38" height="2" fill="#f8c880"/><rect x="-2" y="13" width="12" height="10" fill="#3a2a22"/>
<rect x="-2" y="19" width="104" height="12" fill="#9a8280"/><rect x="48" y="21" width="20" height="3" fill="#e8e8f0"/><rect x="70" y="17" width="25" height="9" fill="#c89890"/><rect x="0" y="22" width="14" height="10" fill="#5a4438"/>
<rect x="18" y="26" width="18" height="9" fill="#f4d8d8"/><rect x="18" y="33" width="18" height="5" fill="#d06060"/>
<rect x="-2" y="36" width="104" height="11" fill="#5a4030"/><rect x="82" y="26" width="7" height="21" fill="#a82030"/><rect x="89" y="26" width="13" height="21" fill="#906868"/><rect x="40" y="36" width="30" height="9" fill="#7a6850"/>
</g><path d="M-1 33 L22 40 L101 17 L101 22 L26 45 L-1 38Z" fill="#dce6e6" filter="url(#bl)"/><rect x="22" y="41" width="8" height="4" fill="#c02838"/></g></svg>
<div class="t pg" style="left:23px;top:228px;letter-spacing:1.15px">Titel: Notarzt Heli bei</div>
<div class="t pg" style="left:23px;top:240px;letter-spacing:1.08px">Vario</div>
<div class="t pg" style="left:23px;top:252px;letter-spacing:1.28px">Poster: <span class="blink">merlin1031</span></div>
<div class="t pg" style="left:23px;top:264px;letter-spacing:1.43px">Verfasst am: 2005-03-</div>
<div class="t pg" style="left:23px;top:276px;letter-spacing:1.47px">19, 12:44</div>
<div class="t pg" style="left:23px;top:288px;letter-spacing:1.28px">Aufrufe: 31</div>
<div class="t pg" style="left:23px;top:300px;letter-spacing:.97px">Bewertung: <i style="letter-spacing:.87px">nicht bewertet</i></div>
<div class="t pg" style="left:23px;top:312px;letter-spacing:1.5px">Kommentare: 0</div>
<div class="t pg" style="left:67px;top:345px;letter-spacing:1.57px">[ <span class="blink">Album</span> ]</div>

<!-- TOPICS TABLE -->
<div class="a" style="left:179px;top:166px;width:905px;height:141px;background:#2c5a78"></div>
<div class="a" style="left:180px;top:166px;width:903px;height:140px;background:#fff"></div>
<div class="a" style="left:179px;top:307px;width:906px;height:3px;background:linear-gradient(#7f98aa,#fff)"></div>
<div class="a" style="left:180px;top:166px;width:32px;height:7px;background:#e8ebf2"></div>
<div class="a" style="left:213px;top:166px;width:492px;height:7px;background:#e8ebf2"></div>
<div class="a" style="left:706px;top:166px;width:126px;height:7px;background:#e8ebf2"></div>
<div class="a" style="left:833px;top:166px;width:62px;height:7px;background:#e8ebf2"></div>
<div class="a" style="left:896px;top:166px;width:186px;height:7px;background:#e8ebf2"></div>
<div class="a" style="left:180px;top:174px;width:32px;height:32px;background:#e8ebf2"></div>
<div class="a" style="left:213px;top:174px;width:492px;height:32px;background:#e8ebf2"></div>
<div class="a" style="left:706px;top:174px;width:126px;height:32px;background:#e8ebf2"></div>
<div class="a" style="left:833px;top:174px;width:62px;height:32px;background:#e8ebf2"></div>
<div class="a" style="left:896px;top:174px;width:186px;height:32px;background:#e8ebf2"></div>
<div class="a" style="left:180px;top:207px;width:32px;height:32px;background:#e8ebf2"></div>
<div class="a" style="left:213px;top:207px;width:492px;height:32px;background:#e8ebf2"></div>
<div class="a" style="left:706px;top:207px;width:126px;height:32px;background:#e8ebf2"></div>
<div class="a" style="left:833px;top:207px;width:62px;height:32px;background:#e8ebf2"></div>
<div class="a" style="left:896px;top:207px;width:186px;height:32px;background:#e8ebf2"></div>
<div class="a" style="left:180px;top:240px;width:32px;height:32px;background:#e8ebf2"></div>
<div class="a" style="left:213px;top:240px;width:492px;height:32px;background:#e8ebf2"></div>
<div class="a" style="left:706px;top:240px;width:126px;height:32px;background:#e8ebf2"></div>
<div class="a" style="left:833px;top:240px;width:62px;height:32px;background:#e8ebf2"></div>
<div class="a" style="left:896px;top:240px;width:186px;height:32px;background:#e8ebf2"></div>
<div class="a" style="left:180px;top:273px;width:32px;height:32px;background:#e8ebf2"></div>
<div class="a" style="left:213px;top:273px;width:492px;height:32px;background:#e8ebf2"></div>
<div class="a" style="left:706px;top:273px;width:126px;height:32px;background:#e8ebf2"></div>
<div class="a" style="left:833px;top:273px;width:62px;height:32px;background:#e8ebf2"></div>
<div class="a" style="left:896px;top:273px;width:186px;height:32px;background:#e8ebf2"></div>
<div class="a" style="left:180px;top:166px;width:903px;height:7px;overflow:hidden"><div class="t tp" style="left:35px;top:-7px;letter-spacing:.16px"><b>FORUM:</b> <span style="color:#006699">VIP-Lounge</span></div><div class="t tp" style="left:718px;top:-8px;color:#1220a0;font-weight:bold">tracer</div></div>
<div class="t tp" style="left:215px;top:177px;color:#006699;letter-spacing:0.5px">Erinnert ihr euch noch an die Serie "Highwayman"?</div>
<div class="t tp" style="left:215px;top:191px;letter-spacing:0.2px"><b>FORUM:</b> <span style="color:#006699">Klönschnack</span></div>
<div class="t tp" style="left:707px;width:124px;text-align:right;top:184px">0</div>
<div class="t tp" style="left:834px;width:60px;text-align:right;top:184px;color:#006699">20</div>
<div class="t tp" style="left:898px;top:177px;letter-spacing:0.63px">2005-05-10, 20:00</div>
<div class="t tp" style="left:898px;top:191px;color:#006699;letter-spacing:-0.3px">Jimmy</div>
<div class="t tp" style="left:215px;top:210px;color:#006699;letter-spacing:0.25px">GY401 Empfindlichkeit beim X-Pro</div>
<div class="t tp" style="left:215px;top:224px;letter-spacing:0.1px"><b>FORUM:</b> <span style="color:#e58a3a">X-Pro</span></div>
<div class="t tp" style="left:707px;width:124px;text-align:right;top:217px">14</div>
<div class="t tp" style="left:834px;width:60px;text-align:right;top:217px;color:#006699">141</div>
<div class="t tp" style="left:898px;top:210px;letter-spacing:0.63px">2005-05-10, 19:59</div>
<div class="t tp" style="left:898px;top:224px;color:#006699;letter-spacing:0px">Force</div>
<div class="t tp" style="left:215px;top:243px;color:#006699;letter-spacing:0.52px">3000er Lipos aus Ebay, fliegt die jemand?</div>
<div class="t tp" style="left:215px;top:257px;letter-spacing:0.16px"><b>FORUM:</b> <span style="color:#006699">T-Rex</span></div>
<div class="t tp" style="left:707px;width:124px;text-align:right;top:250px">1</div>
<div class="t tp" style="left:834px;width:60px;text-align:right;top:250px;color:#006699">53</div>
<div class="t tp" style="left:898px;top:243px;letter-spacing:0.63px">2005-05-10, 19:44</div>
<div class="t tp" style="left:898px;top:257px;color:#006699;letter-spacing:0px">Reimann</div>
<div class="t tp" style="left:215px;top:276px;color:#006699;letter-spacing:0.58px">was fürs Auge 120° Chassis</div>
<div class="t tp" style="left:215px;top:290px;letter-spacing:0.16px"><b>FORUM:</b> <span style="color:#006699">T-Rex</span></div>
<div class="t tp" style="left:707px;width:124px;text-align:right;top:283px">13</div>
<div class="t tp" style="left:834px;width:60px;text-align:right;top:283px;color:#006699">338</div>
<div class="t tp" style="left:898px;top:276px;letter-spacing:0.63px">2005-05-10, 19:37</div>
<div class="t tp" style="left:898px;top:290px;color:#006699;letter-spacing:0.28px">Crazy Pilot</div>

<!-- POLL PANEL (right) -->
<div class="a" style="left:1094px;top:166px;width:150px;height:137px;background:#2c5a78"></div>
<div class="a" style="left:1095px;top:166px;width:148px;height:136px;background:#e8f6fc"></div>
<div class="a" style="left:1096px;top:166px;width:146px;height:94px;background:#e6e9f1"></div>
<div class="a" style="left:1096px;top:261px;width:146px;height:19px;background:#e3e7ef"></div>
<div class="a" style="left:1096px;top:281px;width:146px;height:21px;background:#e6e9f1"></div>
<div class="a" style="left:1096px;top:303px;width:149px;height:4px;background:linear-gradient(#8f9ca6,#fff)"></div>
<div class="a" style="left:1095px;top:173px;width:148px;height:1px;background:#fff;display:none"></div>
<div class="t pg" style="left:1103px;top:173px;letter-spacing:1.15px">44444 Posts</div>
<div class="t pg" style="left:1198px;top:173px;letter-spacing:1.6px">[ 39 ]</div>
<div class="a" style="left:1103px;top:191px;width:38px;height:12px;border:1px solid #1e4a64;border-radius:4px;background:linear-gradient(#fdfdfd,#e4e4e4 60%,#ececec)"></div>
<div class="t pg" style="left:1201px;top:193px;font-weight:bold;letter-spacing:2.1px">42%</div>
<div class="t pg" style="left:1103px;top:211px;letter-spacing:1.15px">Ist doch völlig</div>
<div class="t pg" style="left:1103px;top:223px;letter-spacing:1.1px">egal...</div>
<div class="t pg" style="left:1198px;top:217px;letter-spacing:1.6px">[ 39 ]</div>
<div class="a" style="left:1103px;top:241px;width:38px;height:12px;border:1px solid #1e4a64;border-radius:4px;background:linear-gradient(#fdfdfd,#e4e4e4 60%,#ececec)"></div>
<div class="t pg" style="left:1201px;top:243px;font-weight:bold;letter-spacing:2.1px">42%</div>
<div class="t pg" style="left:1100px;top:265px;font-weight:bold;letter-spacing:1.01px">Stimmen insgesamt : 92</div>
<div class="t pg" style="left:1108px;top:286px;letter-spacing:1.0px">[ <b class="blink">Ergebnis anzeigen</b> ]</div>

<!-- WHO IS ONLINE -->
<div class="a" style="left:179px;top:325px;width:905px;height:641px;background:#2c5a78"></div>
<div class="a" style="left:180px;top:326px;width:903px;height:640px;background:#e8ebf2"></div>
<div class="a" style="left:180px;top:326px;width:903px;height:1px;background:#9cd0f0"></div>
<div class="a" style="left:181px;top:327px;width:901px;height:27px;background:linear-gradient(#0a4c9c,#0058b4 40%,#0062c6)"></div>
<div class="a" style="left:180px;top:354px;width:903px;height:1px;background:#fff"></div>
<div class="a" style="left:180px;top:354px;width:1px;height:612px;background:#e2f4fc"></div><div class="a" style="left:1082px;top:354px;width:1px;height:612px;background:#e2f4fc"></div>
<div class="t" style="left:181px;top:334px;width:901px;text-align:center;color:#e6f6ff;font-weight:bold;font-size:12px;line-height:14px;letter-spacing:.6px">Wer ist online?</div>
<div class="t pg" style="left:184px;top:360px;letter-spacing:1.2px">Wir haben <b>620</b> registrierte Benutzer.&nbsp; Der neueste Benutzer ist <b style="color:#0f5f8f">turkana</b>.</div>
<div class="t pg" style="left:184px;top:372px;letter-spacing:1.23px">Unsere Benutzer haben insgesamt <b>53991</b> Beiträge geschrieben.</div>
<div class="t pg ol" style="left:184px;top:384px">Insgesamt sind <b>33</b> Benutzer online: 24 registrierte, kein versteckter und 9 Gäste</div>
<div class="t pg ol" style="left:184px;top:396px">Insgesamt sind <b>33</b> Benutzer online: 24 registrierte, kein versteckter und 9 Gäste</div>
<div class="t pg ol" style="left:184px;top:408px">Insgesamt sind <b>33</b> Benutzer online: 24 registrierte, kein versteckter und 9 Gäste</div>
<div class="t pg ol" style="left:184px;top:420px">Insgesamt sind <b>33</b> Benutzer online: 24 registrierte, kein versteckter und 9 Gäste</div>
<div class="t pg ol" style="left:184px;top:432px">Insgesamt sind <b>33</b> Benutzer online: 24 registrierte, kein versteckter und 9 Gäste</div>
<div class="t pg ol" style="left:184px;top:444px">Insgesamt sind <b>33</b> Benutzer online: 24 registrierte, kein versteckter und 9 Gäste</div>
<div class="t pg ol" style="left:184px;top:455px">Insgesamt sind <b>33</b> Benutzer online: 24 registrierte, kein versteckter und 9 Gäste</div>
<div class="t pg ol" style="left:184px;top:467px">Insgesamt sind <b>33</b> Benutzer online: 24 registrierte, kein versteckter und 9 Gäste</div>
<div class="t pg ol" style="left:184px;top:479px">Insgesamt sind <b>33</b> Benutzer online: 24 registrierte, kein versteckter und 9 Gäste</div>
<div class="t pg ol" style="left:184px;top:491px">Insgesamt sind <b>33</b> Benutzer online: 24 registrierte, kein versteckter und 9 Gäste</div>
<div class="t pg ol" style="left:184px;top:503px">Insgesamt sind <b>33</b> Benutzer online: 24 registrierte, kein versteckter und 9 Gäste</div>
<div class="a" style="left:184px;top:515px;width:460px;height:8px;overflow:hidden"><div class="t pg ol" style="left:0;top:0">Insgesamt sind <b>33</b> Benutzer online: 24 registrierte, kein versteckter und 9 Gäste</div></div>
<div class="a" style="left:241px;top:518px;width:1px;height:448px;background:#000"></div>
<div class="a" style="left:269px;top:515px;width:1px;height:451px;background:#000"></div>
<div class="a" style="left:276px;top:523px;width:1px;height:443px;background:#000"></div>
<div class="a" style="left:279px;top:523px;width:2px;height:443px;background:#000"></div>
<div class="a" style="left:283px;top:523px;width:1px;height:443px;background:#000"></div>
<div class="a" style="left:286px;top:523px;width:2px;height:443px;background:#000"></div>
<div class="a" style="left:294px;top:523px;width:1px;height:443px;background:#000"></div>
<div class="a" style="left:297px;top:523px;width:1px;height:443px;background:#000"></div>
<div class="a" style="left:322px;top:518px;width:1px;height:448px;background:#000"></div>
<div class="a" style="left:361px;top:515px;width:1px;height:451px;background:#000"></div>
<div class="a" style="left:390px;top:523px;width:1px;height:443px;background:#000"></div>
<div class="a" style="left:394px;top:523px;width:1px;height:443px;background:#000"></div>
<div class="a" style="left:399px;top:523px;width:2px;height:443px;background:#000"></div>
<div class="a" style="left:435px;top:518px;width:1px;height:448px;background:#000"></div>
<div class="a" style="left:457px;top:518px;width:1px;height:448px;background:#000"></div>
<div class="a" style="left:476px;top:515px;width:1px;height:451px;background:#000"></div>
<div class="a" style="left:527px;top:518px;width:1px;height:448px;background:#000"></div>
<div class="a" style="left:543px;top:515px;width:1px;height:451px;background:#000"></div>
<div class="a" style="left:550px;top:518px;width:1px;height:448px;background:#000"></div>
<div class="a" style="left:587px;top:515px;width:1px;height:451px;background:#000"></div>
<div class="a" style="left:594px;top:523px;width:1px;height:443px;background:#000"></div>
<div class="a" style="left:598px;top:523px;width:1px;height:443px;background:#000"></div>
<div class="a" style="left:606px;top:523px;width:1px;height:443px;background:#000"></div>
<div class="a" style="left:610px;top:523px;width:1px;height:443px;background:#000"></div>
<div class="a" style="left:626px;top:518px;width:1px;height:448px;background:#000"></div>
<div class="a" style="left:185px;top:528px;width:3px;height:1px;background:#000"></div><div class="a" style="left:186px;top:528px;width:1px;height:7px;background:#000"></div><div class="a" style="left:185px;top:534px;width:3px;height:1px;background:#000"></div>
<div class="a" style="left:185px;top:540px;width:3px;height:1px;background:#000"></div><div class="a" style="left:186px;top:540px;width:1px;height:7px;background:#000"></div><div class="a" style="left:185px;top:546px;width:3px;height:1px;background:#000"></div>
<div class="a" style="left:185px;top:552px;width:3px;height:1px;background:#000"></div><div class="a" style="left:186px;top:552px;width:1px;height:7px;background:#000"></div><div class="a" style="left:185px;top:558px;width:3px;height:1px;background:#000"></div>
<div class="a" style="left:185px;top:564px;width:3px;height:1px;background:#000"></div><div class="a" style="left:186px;top:564px;width:1px;height:7px;background:#000"></div><div class="a" style="left:185px;top:570px;width:3px;height:1px;background:#000"></div>
<div class="a" style="left:185px;top:576px;width:3px;height:1px;background:#000"></div><div class="a" style="left:186px;top:576px;width:1px;height:7px;background:#000"></div><div class="a" style="left:185px;top:582px;width:3px;height:1px;background:#000"></div>
<div class="a" style="left:185px;top:588px;width:3px;height:1px;background:#000"></div><div class="a" style="left:186px;top:588px;width:1px;height:7px;background:#000"></div><div class="a" style="left:185px;top:594px;width:3px;height:1px;background:#000"></div>
<div class="a" style="left:185px;top:600px;width:3px;height:1px;background:#000"></div><div class="a" style="left:186px;top:600px;width:1px;height:7px;background:#000"></div><div class="a" style="left:185px;top:606px;width:3px;height:1px;background:#000"></div>
<div class="a" style="left:186px;top:606px;width:1px;height:360px;background:#000"></div>
<div class="a" style="left:185px;top:606px;width:3px;height:360px;background:repeating-linear-gradient(#000 0 1px,transparent 1px 2px)"></div>

<!-- ZULETZT ONLINE -->
<div class="a" style="left:1094px;top:321px;width:150px;height:645px;background:#2c5a78"></div>
<div class="a" style="left:1095px;top:322px;width:148px;height:644px;background:#e8ebf2"></div>
<div class="a" style="left:1095px;top:322px;width:148px;height:1px;background:#9cd0f0"></div>
<div class="a" style="left:1096px;top:323px;width:146px;height:27px;background:linear-gradient(#0a4c9c,#0058b4 40%,#0062c6)"></div>
<div class="a" style="left:1095px;top:350px;width:148px;height:1px;background:#fff"></div>
<div class="a" style="left:1095px;top:350px;width:1px;height:616px;background:#e2f4fc"></div><div class="a" style="left:1242px;top:350px;width:1px;height:616px;background:#e2f4fc"></div>
<div class="t" style="left:1096px;top:330px;width:146px;text-align:center;color:#e6f6ff;font-weight:bold;font-size:12px;line-height:14px;letter-spacing:.6px">Zuletzt online</div>
<div class="t pg" style="left:1099px;top:356px;letter-spacing:1.45px">Insgesamt haben heute</div>
<div class="t pg" style="left:1099px;top:368px;letter-spacing:1.2px"><b>532</b> User das Forum</div>
<div class="t pg" style="left:1099px;top:380px;letter-spacing:1.35px">besucht: 173</div>
<div class="a" style="left:1099px;top:394px;width:80px;height:6px;overflow:hidden"><div class="t pg" style="left:0;top:-5px;letter-spacing:1.35px">besucht: 173</div></div><div class="a" style="left:1202px;top:394px;width:1px;height:2px;background:#000"></div><div class="a" style="left:1218px;top:393px;width:1px;height:3px;background:#000"></div><div class="a" style="left:1225px;top:394px;width:1px;height:2px;background:#000"></div>
<div class="a" style="left:1099px;top:406px;width:80px;height:6px;overflow:hidden"><div class="t pg" style="left:0;top:-5px;letter-spacing:1.35px">besucht: 173</div></div><div class="a" style="left:1202px;top:406px;width:1px;height:2px;background:#000"></div><div class="a" style="left:1218px;top:405px;width:1px;height:3px;background:#000"></div><div class="a" style="left:1225px;top:406px;width:1px;height:2px;background:#000"></div>
<div class="a" style="left:1099px;top:418px;width:80px;height:6px;overflow:hidden"><div class="t pg" style="left:0;top:-5px;letter-spacing:1.35px">besucht: 173</div></div><div class="a" style="left:1202px;top:418px;width:1px;height:2px;background:#000"></div><div class="a" style="left:1218px;top:417px;width:1px;height:3px;background:#000"></div><div class="a" style="left:1225px;top:418px;width:1px;height:2px;background:#000"></div>
<div class="a" style="left:1099px;top:430px;width:80px;height:6px;overflow:hidden"><div class="t pg" style="left:0;top:-5px;letter-spacing:1.35px">besucht: 173</div></div><div class="a" style="left:1202px;top:430px;width:1px;height:2px;background:#000"></div><div class="a" style="left:1218px;top:429px;width:1px;height:3px;background:#000"></div><div class="a" style="left:1225px;top:430px;width:1px;height:2px;background:#000"></div>
<div class="a" style="left:1099px;top:442px;width:80px;height:6px;overflow:hidden"><div class="t pg" style="left:0;top:-5px;letter-spacing:1.35px">besucht: 173</div></div><div class="a" style="left:1202px;top:442px;width:1px;height:2px;background:#000"></div><div class="a" style="left:1218px;top:441px;width:1px;height:3px;background:#000"></div><div class="a" style="left:1225px;top:442px;width:1px;height:2px;background:#000"></div>
<div class="a" style="left:1099px;top:454px;width:80px;height:6px;overflow:hidden"><div class="t pg" style="left:0;top:-5px;letter-spacing:1.35px">besucht: 173</div></div><div class="a" style="left:1202px;top:454px;width:1px;height:2px;background:#000"></div><div class="a" style="left:1218px;top:453px;width:1px;height:3px;background:#000"></div><div class="a" style="left:1225px;top:454px;width:1px;height:2px;background:#000"></div>
<div class="a" style="left:1099px;top:466px;width:80px;height:6px;overflow:hidden"><div class="t pg" style="left:0;top:-5px;letter-spacing:1.35px">besucht: 173</div></div><div class="a" style="left:1202px;top:466px;width:1px;height:2px;background:#000"></div><div class="a" style="left:1218px;top:465px;width:1px;height:3px;background:#000"></div><div class="a" style="left:1225px;top:466px;width:1px;height:2px;background:#000"></div>
<div class="a" style="left:1099px;top:478px;width:80px;height:6px;overflow:hidden"><div class="t pg" style="left:0;top:-5px;letter-spacing:1.35px">besucht: 173</div></div><div class="a" style="left:1202px;top:478px;width:1px;height:2px;background:#000"></div><div class="a" style="left:1218px;top:477px;width:1px;height:3px;background:#000"></div><div class="a" style="left:1225px;top:478px;width:1px;height:2px;background:#000"></div>
<div class="a" style="left:1099px;top:490px;width:80px;height:6px;overflow:hidden"><div class="t pg" style="left:0;top:-5px;letter-spacing:1.35px">besucht: 173</div></div><div class="a" style="left:1202px;top:490px;width:1px;height:2px;background:#000"></div><div class="a" style="left:1218px;top:489px;width:1px;height:3px;background:#000"></div><div class="a" style="left:1225px;top:490px;width:1px;height:2px;background:#000"></div>
<div class="a" style="left:1099px;top:502px;width:80px;height:6px;overflow:hidden"><div class="t pg" style="left:0;top:-5px;letter-spacing:1.35px">besucht: 173</div></div><div class="a" style="left:1202px;top:502px;width:1px;height:2px;background:#000"></div><div class="a" style="left:1218px;top:501px;width:1px;height:3px;background:#000"></div><div class="a" style="left:1225px;top:502px;width:1px;height:2px;background:#000"></div>
<div class="a" style="left:1099px;top:514px;width:80px;height:6px;overflow:hidden"><div class="t pg" style="left:0;top:-5px;letter-spacing:1.35px">besucht: 173</div></div><div class="a" style="left:1202px;top:514px;width:1px;height:2px;background:#000"></div><div class="a" style="left:1218px;top:513px;width:1px;height:3px;background:#000"></div><div class="a" style="left:1225px;top:514px;width:1px;height:2px;background:#000"></div>
<div class="a" style="left:1099px;top:526px;width:80px;height:6px;overflow:hidden"><div class="t pg" style="left:0;top:-5px;letter-spacing:1.35px">besucht: 173</div></div><div class="a" style="left:1202px;top:526px;width:1px;height:2px;background:#000"></div><div class="a" style="left:1218px;top:525px;width:1px;height:3px;background:#000"></div><div class="a" style="left:1225px;top:526px;width:1px;height:2px;background:#000"></div>
<div class="a" style="left:1099px;top:538px;width:80px;height:6px;overflow:hidden"><div class="t pg" style="left:0;top:-5px;letter-spacing:1.35px">besucht: 173</div></div><div class="a" style="left:1202px;top:538px;width:1px;height:2px;background:#000"></div><div class="a" style="left:1218px;top:537px;width:1px;height:3px;background:#000"></div><div class="a" style="left:1225px;top:538px;width:1px;height:2px;background:#000"></div>
<div class="a" style="left:1099px;top:550px;width:80px;height:6px;overflow:hidden"><div class="t pg" style="left:0;top:-5px;letter-spacing:1.35px">besucht: 173</div></div><div class="a" style="left:1202px;top:550px;width:1px;height:2px;background:#000"></div><div class="a" style="left:1218px;top:549px;width:1px;height:3px;background:#000"></div><div class="a" style="left:1225px;top:550px;width:1px;height:2px;background:#000"></div>
<div class="a" style="left:1099px;top:562px;width:80px;height:6px;overflow:hidden"><div class="t pg" style="left:0;top:-5px;letter-spacing:1.35px">besucht: 173</div></div><div class="a" style="left:1202px;top:562px;width:1px;height:2px;background:#000"></div><div class="a" style="left:1218px;top:561px;width:1px;height:3px;background:#000"></div><div class="a" style="left:1225px;top:562px;width:1px;height:2px;background:#000"></div>
<div class="a" style="left:1099px;top:574px;width:80px;height:6px;overflow:hidden"><div class="t pg" style="left:0;top:-5px;letter-spacing:1.35px">besucht: 173</div></div><div class="a" style="left:1202px;top:574px;width:1px;height:2px;background:#000"></div><div class="a" style="left:1218px;top:573px;width:1px;height:3px;background:#000"></div><div class="a" style="left:1225px;top:574px;width:1px;height:2px;background:#000"></div>
<div class="a" style="left:1099px;top:586px;width:80px;height:6px;overflow:hidden"><div class="t pg" style="left:0;top:-5px;letter-spacing:1.35px">besucht: 173</div></div><div class="a" style="left:1202px;top:586px;width:1px;height:2px;background:#000"></div><div class="a" style="left:1218px;top:585px;width:1px;height:3px;background:#000"></div><div class="a" style="left:1225px;top:586px;width:1px;height:2px;background:#000"></div>
<div class="a" style="left:1099px;top:598px;width:80px;height:6px;overflow:hidden"><div class="t pg" style="left:0;top:-5px;letter-spacing:1.35px">besucht: 173</div></div><div class="a" style="left:1202px;top:598px;width:1px;height:2px;background:#000"></div><div class="a" style="left:1218px;top:597px;width:1px;height:3px;background:#000"></div><div class="a" style="left:1225px;top:598px;width:1px;height:2px;background:#000"></div>

<!-- right gap + scrollbar -->
<div class="a" style="left:1254px;top:166px;width:1px;height:800px;background:#9aa0a8"></div>
<div class="a" style="left:1255px;top:166px;width:25px;height:800px;background:#eceef5"></div>
<div class="a" style="left:1278px;top:166px;width:2px;height:800px;background:#f6f6f2"></div>
<div class="a" style="left:1261px;top:166px;width:17px;height:17px;background:#dfe3ea;border:1px solid #a4a8b0;border-top:none;box-shadow:inset 1px 1px 0 #fff"></div>
<div class="a" style="left:1266px;top:173px;width:0;height:0;border-left:3.5px solid transparent;border-right:3.5px solid transparent;border-bottom:4px solid #1a5878"></div>
<div class="a" style="left:1261px;top:183px;width:17px;height:446px;background:linear-gradient(90deg,#d8dde6,#e2e6ee);border:1px solid #a4a8b0;box-shadow:inset 1px 1px 0 #fff"></div>
<div class="a" style="left:1261px;top:948px;width:17px;height:17px;background:#dfe3ea;border:1px solid #a4a8b0;box-shadow:inset 1px 1px 0 #fff"></div>
<div class="a" style="left:1266px;top:955px;width:0;height:0;border-left:3.5px solid transparent;border-right:3.5px solid transparent;border-top:4px solid #1a5878"></div>
<!-- STATUS BAR -->
<div class="bar" style="top:966px;height:1px;background:#fbfbf8"></div><div class="bar" style="top:967px;height:1px;background:#96928a"></div><div class="bar" style="top:968px;height:22px;background:linear-gradient(#d8d4c4,#eeebde 3px,#ebe7d8 18px,#dcd8c6 21px,#dcd8c6)"></div>
<svg class="a" style="left:2px;top:971px" width="16" height="16" viewBox="0 0 16 16"><path d="M3.5 0.5H11.5L15.5 4.5V15.5H3.5Z" fill="#dfe2fa" stroke="#5c6390"/><path d="M11.5 0.5V4.5H15.5" fill="#f4f4ff" stroke="#5c6390"/><circle cx="6.5" cy="8.5" r="5.2" fill="#2f78cc"/><path d="M3.3 8.2H9.8" stroke="#bfeaff" stroke-width="1.6"/><path d="M9.6 10.6Q7 11.6 4.5 10.8" stroke="#bfeaff" stroke-width="1.2" fill="none"/><circle cx="6.5" cy="6.6" r="1" fill="#9adcff"/><path d="M0.8 7.5L4 3.5Q7 1.8 10.5 3" stroke="#1f5ea8" stroke-width="1.2" fill="none"/></svg>
<div class="t ch" style="left:21px;top:974px;letter-spacing:.07px">(Noch 1 Element) Seite http://www.rc-heli-fan.org/shoutbox_view.php?0?auto_refresh=1 wird geöffnet</div>
<div class="a" style="left:945px;top:969px;width:1px;height:19px;background:#cdc9b6;box-shadow:1px 0 0 #fff"></div>
<div class="a" style="left:969px;top:969px;width:1px;height:19px;background:#cdc9b6;box-shadow:1px 0 0 #fff"></div>
<div class="a" style="left:994px;top:969px;width:1px;height:19px;background:#cdc9b6;box-shadow:1px 0 0 #fff"></div>
<div class="a" style="left:1018px;top:969px;width:1px;height:19px;background:#cdc9b6;box-shadow:1px 0 0 #fff"></div>
<div class="a" style="left:1042px;top:969px;width:1px;height:19px;background:#cdc9b6;box-shadow:1px 0 0 #fff"></div>
<div class="a" style="left:1066px;top:969px;width:1px;height:19px;background:#cdc9b6;box-shadow:1px 0 0 #fff"></div>
<svg class="a" style="left:1073px;top:972px" width="14" height="14" viewBox="0 0 14 14"><circle cx="7" cy="7" r="6.5" fill="#0c20c8" stroke="#101028"/><path d="M3 2.5Q6 1 9 2 L7 5 L4 5Z" fill="#2ac838"/><path d="M9.5 6 L12.8 5 Q13.5 9 11 11.5 L9.5 9Z" fill="#2ac838"/><path d="M1.2 8 L4 9 L5 12.5 Q2 11.5 1.2 8Z" fill="#2ac838"/></svg>
<div class="t ch" style="left:1092px;top:974px">Internet</div>
<div class="a" style="left:0;top:990px;width:1280px;height:1px;background:#3a70c8"></div><div class="a" style="left:0;top:991px;width:1280px;height:3px;background:#3c80e8"></div>
</body></html>
